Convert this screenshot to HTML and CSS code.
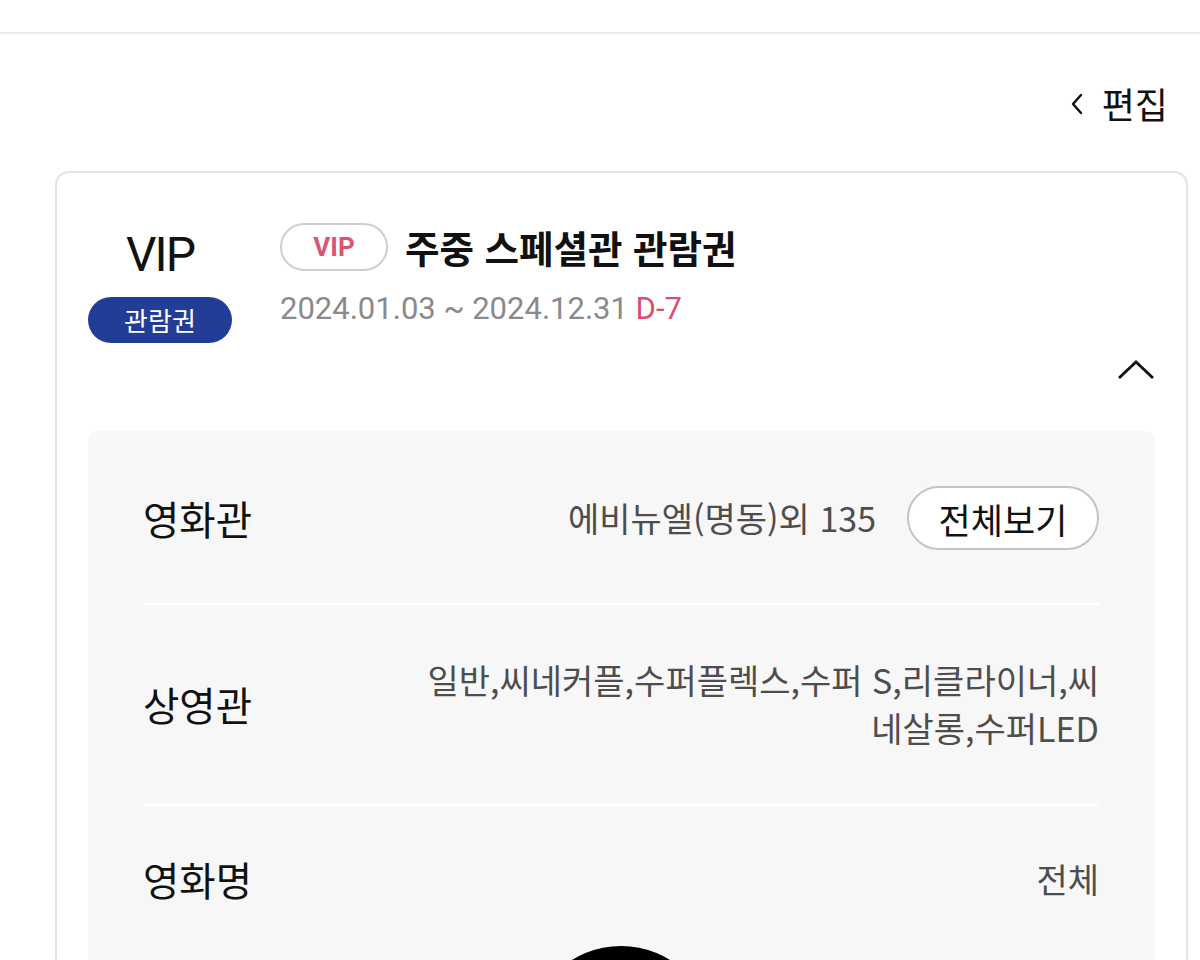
FILE: index.html
```html
<!DOCTYPE html>
<html lang="ko">
<head>
<meta charset="utf-8">
<link rel="stylesheet" href="styles.css">
</head>
<body>
<div class="page">
  <div class="topbar"></div>
  <div class="edit-row">
    <button class="edit-btn">
      <svg class="edit-chev" width="12" height="22" viewBox="0 0 12 22"><polyline points="10,2 2,11 10,20" fill="none" stroke="#111" stroke-width="2.4" stroke-linecap="round" stroke-linejoin="round"/></svg>
      <span>편집</span>
    </button>
  </div>
  <div class="card">
    <div class="summary">
      <div class="grade">
        <div class="grade-name">VIP</div>
        <div class="grade-badge">관람권</div>
      </div>
      <div class="info">
        <div class="title-line">
          <span class="vip-pill">VIP</span>
          <span class="title">주중 스페셜관 관람권</span>
        </div>
        <div class="date">2024.01.03 ~ 2024.12.31 <span class="dday">D-7</span></div>
      </div>
    </div>
    <div class="toggle">
      <svg width="38" height="20" viewBox="0 0 38 20"><polyline points="2,18 19,2 36,18" fill="none" stroke="#111" stroke-width="2.8" stroke-linejoin="miter"/></svg>
    </div>
    <div class="panel">
      <div class="row">
        <div class="label">영화관</div>
        <div class="value-group">
          <span class="value">에비뉴엘(명동)외 135</span>
          <button class="all-btn">전체보기</button>
        </div>
      </div>
      <div class="row row-tall">
        <div class="label">상영관</div>
        <div class="value multi">
          <span class="line">일반,씨네커플,수퍼플렉스,수퍼 S,리클라이너,씨</span>
          <span class="line">네살롱,수퍼LED</span>
        </div>
      </div>
      <div class="row row-last">
        <div class="label">영화명</div>
        <div class="value">전체</div>
      </div>
      <div class="poster">
        <div class="poster-circle"></div>
      </div>
    </div>
  </div>
</div>
</body>
</html>
```

FILE: styles.css
```css
* { box-sizing: border-box; }
html, body {
  margin: 0;
  padding: 0;
  background: #fff;
  height: 960px;
  overflow: hidden;
}
body {
  font-family: Roboto, "Noto Sans CJK KR", sans-serif;
  color: #111;
}
.page { width: 1200px; }
.topbar {
  height: 34px;
  border-bottom: 2px solid #ececec;
}
.edit-row {
  height: 137px;
  display: flex;
  justify-content: flex-end;
  align-items: flex-start;
  padding: 50px 32px 0 0;
}
.edit-btn {
  display: flex;
  align-items: center;
  gap: 19px;
  background: none;
  border: 0;
  padding: 0;
  font-family: "Noto Sans CJK KR", sans-serif;
  font-size: 36px;
  line-height: 38px;
  color: #111;
}
.edit-chev { margin-top: 2px; }
.card {
  margin-left: 55px;
  width: 1133px;
  border: 2px solid #e4e4e4;
  border-bottom: 0;
  border-radius: 14px 14px 0 0;
  padding: 48px 31px 0 31px;
  height: 900px;
}
.summary {
  display: flex;
  align-items: flex-start;
}
.grade {
  width: 144px;
  display: flex;
  flex-direction: column;
  align-items: center;
  padding-top: 8px;
}
.grade-name {
  font-family: Roboto, sans-serif;
  font-size: 48px;
  line-height: 52px;
  letter-spacing: -2px;
  color: #111;
}
.grade-badge {
  margin-top: 16px;
  width: 144px;
  height: 46px;
  border-radius: 23px;
  background: #213d96;
  color: #fff;
  font-family: "Noto Sans CJK KR", sans-serif;
  font-size: 26px;
  line-height: 46px;
  text-align: center;
}
.info {
  margin-left: 48px;
}
.title-line {
  display: flex;
  align-items: center;
  gap: 17px;
  height: 52px;
}
.vip-pill {
  width: 108px;
  height: 48px;
  border: 2px solid #cfcfcf;
  border-radius: 24px;
  display: flex;
  align-items: center;
  justify-content: center;
  font-family: Roboto, sans-serif;
  font-weight: 700;
  font-size: 26px;
  color: #dc5570;
}
.title {
  font-family: "Noto Sans CJK KR", sans-serif;
  font-weight: 700;
  font-size: 37.5px;
  line-height: 44px;
  color: #111;
}
.date {
  margin-top: 16px;
  font-family: Roboto, sans-serif;
  font-size: 31px;
  line-height: 40px;
  color: #8a8a8a;
}
.dday { color: #d9506e; }
.toggle {
  display: flex;
  justify-content: flex-end;
  margin-top: 17px;
}
.panel {
  margin-top: 51px;
  background: #f7f7f7;
  border-radius: 10px 10px 0 0;
  padding: 0 56px 0 55px;
  height: 600px;
}
.row {
  display: flex;
  justify-content: space-between;
  align-items: center;
  padding: 55px 0 53px;
  border-bottom: 2px solid #fff;
}
.row-tall { padding: 51px 0 52px; }
.row-last { border-bottom: 0; padding: 52px 0 38px; }
.label {
  font-family: "Noto Sans CJK KR", sans-serif;
  font-size: 39.5px;
  line-height: 42px;
  color: #111;
}
.value-group {
  display: flex;
  align-items: center;
  gap: 31px;
}
.value {
  font-family: "Noto Sans CJK KR", sans-serif;
  font-size: 34px;
  line-height: 42px;
  color: #4d4d4d;
  text-align: right;
}
.multi {
  display: flex;
  flex-direction: column;
  align-items: flex-end;
  line-height: 48px;
}
.multi .line { white-space: nowrap; }
.all-btn {
  width: 192px;
  height: 64px;
  border: 2px solid #c4c4c4;
  border-radius: 32px;
  background: #fff;
  font-family: "Noto Sans CJK KR", sans-serif;
  font-size: 35px;
  color: #111;
  padding: 0;
}
.poster {
  display: flex;
  justify-content: center;
  padding-top: 8px;
}
.poster-circle {
  width: 186px;
  height: 186px;
  border-radius: 50%;
  background: #000;
}
```
